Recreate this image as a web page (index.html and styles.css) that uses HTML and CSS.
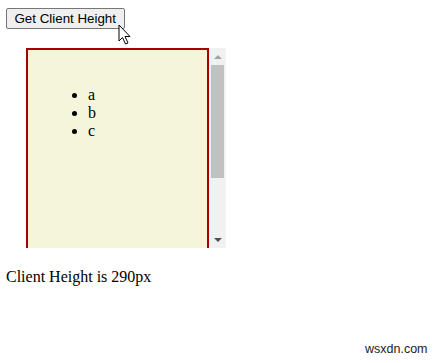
FILE: index.html
```html
<!DOCTYPE html>
<html>
<head>
<meta charset="utf-8">
<link rel="stylesheet" href="styles.css">
</head>
<body>
<button class="btn">Get Client Height</button>
<div class="scroller">
  <div class="viewport">
    <div class="box">
      <ul class="list">
        <li>a</li>
        <li>b</li>
        <li>c</li>
      </ul>
    </div>
  </div>
  <div class="scrollbar">
    <div class="sb-btn">
      <svg width="8" height="4" viewBox="0 0 8 4"><polygon points="0,4 8,4 4,0" fill="#a3a3a3"/></svg>
    </div>
    <div class="sb-track"><div class="sb-thumb"></div></div>
    <div class="sb-btn">
      <svg width="8" height="4" viewBox="0 0 8 4"><polygon points="0,0 8,0 4,4" fill="#505050"/></svg>
    </div>
  </div>
</div>
<p class="result">Client Height is 290px</p>
<svg class="cursor" width="14" height="22" viewBox="0 0 14 22">
  <path d="M1 1 L1 17 L4.5 13.5 L7.5 20 L10 19 L7 12.5 L12 12.5 Z" fill="#fff" stroke="#000" stroke-width="1" stroke-linejoin="round"/>
</svg>
<span class="mark">wsxdn.com</span>
</body>
</html>
```
FILE: styles.css
```css
html, body {
  margin: 0;
  padding: 0;
}
body {
  padding: 8px 6px;
  font-family: "Liberation Serif", "Times New Roman", serif;
  font-size: 16px;
  color: #000;
  background: #fff;
  position: relative;
  width: 429px;
  height: 347px;
  overflow: hidden;
}
.btn {
  display: block;
  margin: 0;
  font-family: "Liberation Sans", Arial, sans-serif;
  font-size: 13.33px;
  height: 21px;
  padding: 1px 7.5px;
  background: #efefef;
  border: 1px solid #767676;
  border-radius: 2px;
  color: #000;
}
.scroller {
  margin: 19px 0 0 20px;
  width: 200px;
  height: 200px;
  display: flex;
  overflow: hidden;
}
.viewport {
  flex: 1;
  overflow: hidden;
}
.scrollbar {
  width: 17px;
  display: flex;
  flex-direction: column;
  background: #f1f1f1;
}
.sb-btn {
  height: 17px;
  display: flex;
  align-items: center;
  justify-content: center;
}
.sb-track {
  flex: 1;
  display: flex;
  justify-content: center;
}
.sb-thumb {
  width: 13px;
  height: 113px;
  background: #c1c1c1;
}
.box {
  box-sizing: border-box;
  height: 294px;
  padding: 20px;
  border: 2px solid #a80000;
  background: #f5f5dc;
}
.list {
  margin: 16px 0;
  padding-left: 40px;
  line-height: 18px;
}
.result {
  margin: 20px 0 0 0;
}
.cursor {
  position: absolute;
  left: 118px;
  top: 24px;
}
.mark {
  position: absolute;
  left: 365px;
  top: 342px;
  font-family: "Liberation Sans", Arial, sans-serif;
  font-size: 12.5px;
  color: #222;
}
```
